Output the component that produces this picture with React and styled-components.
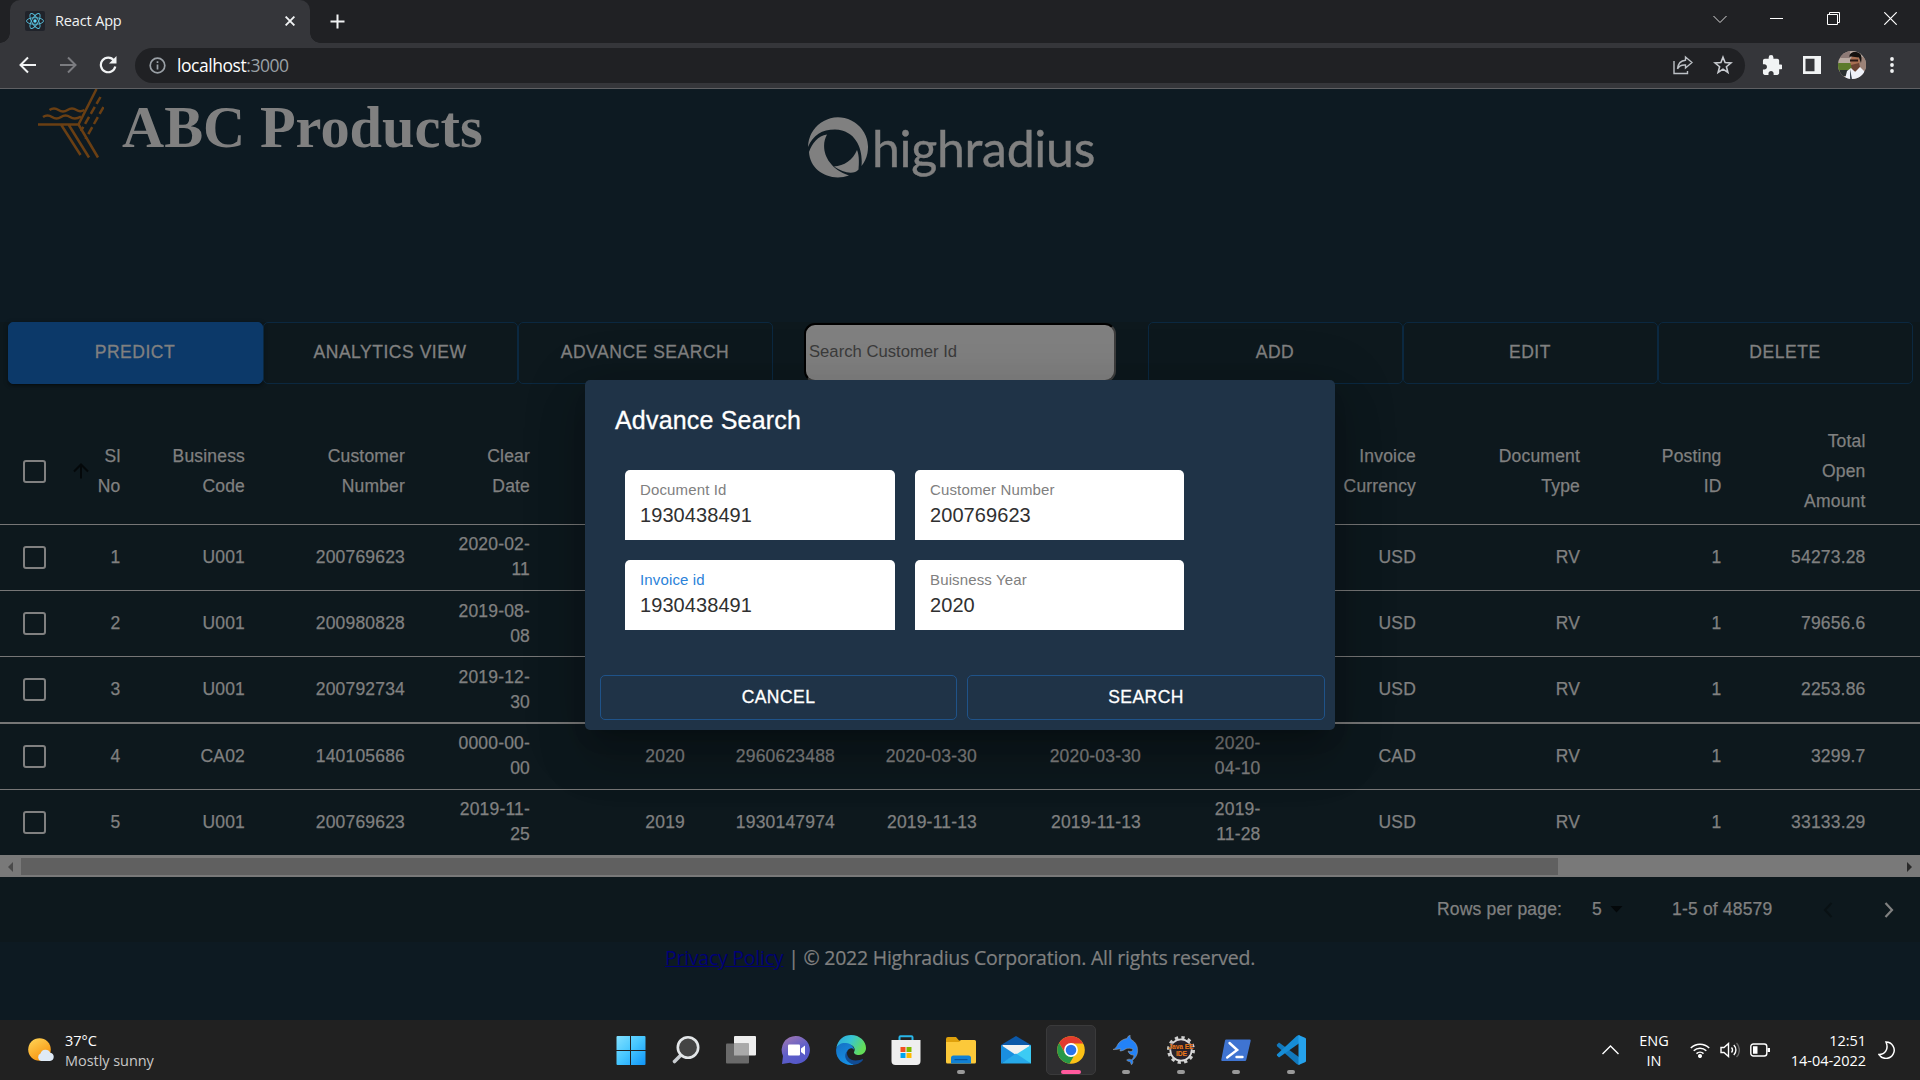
import React from "react";
import styled, { createGlobalStyle } from "styled-components";

const GlobalStyle = createGlobalStyle`
  * { box-sizing: border-box; }
  html, body { margin: 0; padding: 0; background: #202124; overflow: hidden; }
`;

const uiFont = `"Open Sans", "Noto Sans", sans-serif`;
const appFont = `"Liberation Sans", Arial, sans-serif`;

const Screen = styled.div`
  width: 1920px;
  height: 1080px;
  display: flex;
  flex-direction: column;
  overflow: hidden;
  font-family: ${appFont};
`;

const Glyph = styled.svg`
  display: block;
  flex: none;
  width: ${(p) => p.$w || 20}px;
  height: ${(p) => p.$h || p.$w || 20}px;
  margin-left: ${(p) => p.$ml || 0}px;
  fill: ${(p) => p.$fill || "none"};
  stroke: ${(p) => p.$stroke || "none"};
  stroke-width: ${(p) => p.$sw || 0};
`;

/* ---------- Browser chrome ---------- */

const TabStrip = styled.div`
  flex: none;
  height: 43px;
  display: flex;
  align-items: stretch;
  padding-left: 10px;
  background: #202124;
`;

const Tab = styled.div`
  position: relative;
  width: 300px;
  padding: 0 15px 1px;
  display: flex;
  align-items: center;
  background: #35363a;
  border-radius: 10px 10px 0 0;

  &::before, &::after {
    content: "";
    position: absolute;
    bottom: 0;
    width: 10px;
    height: 10px;
  }
  &::before { left: -10px; background: radial-gradient(circle at 0 0, #202124 9.5px, #35363a 10px); }
  &::after { right: -10px; background: radial-gradient(circle at 100% 0, #202124 9.5px, #35363a 10px); }
`;

const TabTitle = styled.span`
  flex: 1;
  margin-left: 10px;
  color: #f1f3f4;
  font: 14.5px/20px ${uiFont};
  letter-spacing: -0.15px;
`;

const NewTab = styled.div`
  width: 55px;
  display: flex;
  align-items: center;
  justify-content: center;
`;

const WindowControls = styled.div`
  margin-left: auto;
  margin-right: 1px;
  height: 37px;
  display: flex;
`;

const WindowButton = styled.div`
  width: 57px;
  display: flex;
  align-items: center;
  justify-content: center;
`;

const Toolbar = styled.div`
  flex: none;
  height: 46px;
  display: flex;
  align-items: center;
  padding: 0 8px 1px;
  background: #35363a;
  border-bottom: 1px solid #5f6063;
`;

const IconSlot = styled.div`
  width: 40px;
  flex: none;
  display: flex;
  align-items: center;
  justify-content: center;
`;

const AddressBar = styled.div`
  width: 1610px;
  height: 35px;
  margin: 0 7px;
  padding: 0 2px 0 14px;
  display: flex;
  align-items: center;
  border-radius: 18px;
  background: #202124;
`;

const Url = styled.span`
  flex: 1;
  margin-left: 11px;
  color: #ffffff;
  font: 17.5px/24px ${uiFont};
  letter-spacing: -0.45px;
  span { color: #9aa0a6; }
`;

/* ---------- Application page ---------- */

const Page = styled.main`
  position: relative;
  flex: none;
  height: 931px;
  display: flex;
  flex-direction: column;
  background: #0d1a22;
`;

const Brand = styled.header`
  height: 233px;
  flex: none;
  display: flex;
  align-items: flex-start;
  padding-left: 38px;
`;

const BrandName = styled.h1`
  width: 686px;
  margin: 5px 0 0 18px;
  color: #808080;
  font: bold 58.4px/68px "Liberation Serif", "Times New Roman", serif;
`;

const ProductLogo = styled.div`
  display: flex;
  align-items: flex-start;
  margin-top: 28px;
`;

const ProductWord = styled.span`
  margin: -4px 0 0 3px;
  color: #808080;
  font: 50px/70px Lato, sans-serif;
  letter-spacing: -0.3px;
  -webkit-text-stroke: 0.4px #808080;
`;

const Grid = styled.section`
  height: 620px;
  flex: none;
  display: flex;
  flex-direction: column;
  background: #0d181d;
`;

const ActionBar = styled.div`
  height: 62px;
  flex: none;
  display: flex;
  align-items: stretch;
  padding: 0 7px 0 8px;
`;

const ActionButton = styled.button`
  width: 255px;
  padding: 0 1px 3px 0;
  border: 1px solid ${(p) => (p.$primary ? "#0c3969" : "#0b2840")};
  border-radius: 5px;
  background: ${(p) => (p.$primary ? "#0c3969" : "transparent")};
  box-shadow: ${(p) => (p.$primary ? "0 3px 3px -2px rgba(0,0,0,.4), 0 1px 5px rgba(0,0,0,.3)" : "none")};
  color: #808080;
  font: 17.5px/30px ${appFont};
  letter-spacing: 0.53px;
  -webkit-text-stroke: 0.3px #808080;
`;

const SearchBox = styled.input`
  width: 312px;
  height: 59px;
  margin: 1px 32px 0 31px;
  padding: 0 3px 1px;
  border: 2px inset #3b3b3b;
  border-color: #15191b #3d3d3d #3d3d3d #15191b;
  border-radius: 11px;
  background: #808080;
  font: 16.667px/24px ${appFont};
  &::placeholder { color: #3b3b3b; opacity: 1; }
`;

const columns = "70px 50.5px 124.5px 160px 125px 155px 150px 142px 164px 119.5px 155.5px 164px 141.5px 144px 55px";

const HeadRow = styled.div`
  flex: none;
  height: 141px;
  padding-top: 34px;
  display: grid;
  grid-template-columns: ${columns};
  align-items: center;
  border-bottom: 1px solid #767676;
`;

const Row = styled.div`
  flex: none;
  height: ${(p) => p.$height}px;
  display: grid;
  grid-template-columns: ${columns};
  align-items: center;
  border-bottom: ${(p) => p.$height - 65}px solid #767676;
`;

const Cell = styled.span`
  padding-bottom: ${(p) => (p.$lift ? 1 : 0)}px;
  text-align: right;
  white-space: pre;
  color: #808080;
  font-size: 17.5px;
  line-height: ${(p) => (p.$head ? 30 : 25)}px;
  letter-spacing: 0.18px;
  -webkit-text-stroke: 0.25px #808080;
`;

const SortCell = styled.div`
  display: flex;
  align-items: center;
  justify-content: space-between;
`;

const Checkbox = styled.i`
  display: block;
  width: 23px;
  height: 23px;
  margin-left: 23px;
  border: 2.5px solid #808080;
  border-radius: 3px;
`;

const ScrollTrack = styled.div`
  flex: none;
  height: 22px;
  display: flex;
  align-items: center;
  background: #797979;
  padding: 1px 8px 0;
`;

const ScrollThumb = styled.div`
  width: 1537px;
  height: 17px;
  margin: 0 auto 0 8px;
  background: #606060;
`;

const Pagination = styled.div`
  flex: 1;
  display: flex;
  align-items: center;
  padding-left: 1437px;
  color: #808080;
  font-size: 17.5px;
  letter-spacing: 0.18px;
  -webkit-text-stroke: 0.25px #808080;
`;

const PageText = styled.span`
  width: ${(p) => p.$w}px;
  margin-left: ${(p) => p.$ml || 0}px;
  white-space: nowrap;
`;

const Footer = styled.footer`
  display: flex;
  justify-content: center;
  color: #808080;
  white-space: pre;
  font: 19.5px/31px ${uiFont};
  letter-spacing: -0.24px;
  -webkit-text-stroke: 0.2px #808080;
  a { color: #000077; text-decoration: underline; -webkit-text-stroke: 0; }
`;

/* ---------- Dialog ---------- */

const Overlay = styled.div`
  position: absolute;
  inset: 0;
  display: flex;
  align-items: center;
  justify-content: center;
`;

const Dialog = styled.div`
  width: 750px;
  height: 350px;
  margin-top: 1px;
  display: flex;
  flex-direction: column;
  border-radius: 5px;
  background: #1f3347;
  box-shadow: 0 14px 19px -9px rgba(0, 0, 0, 0.2), 0 30px 48px 4px rgba(0, 0, 0, 0.14),
    0 11px 58px 10px rgba(0, 0, 0, 0.12);
`;

const DialogTitle = styled.h2`
  margin: 0;
  padding: 20px 30px;
  color: #ffffff;
  font: 25px/40px ${appFont};
  letter-spacing: 0.19px;
  -webkit-text-stroke: 0.3px #ffffff;
`;

const Fields = styled.div`
  display: grid;
  grid-template-columns: 270px 269px;
  gap: 20px;
  padding: 10px 40px 0;
`;

const Field = styled.label`
  height: 70px;
  padding: 10px 15px 0;
  display: flex;
  flex-direction: column;
  border-radius: 5px 5px 0 0;
  background: #ffffff;
`;

const FieldLabel = styled.span`
  color: ${(p) => (p.$focused ? "#2b82d9" : "#808080")};
  font-size: 15px;
  line-height: 20px;
  letter-spacing: 0.14px;
`;

const FieldInput = styled.input`
  width: 100%;
  height: 30px;
  padding: 0;
  border: 0;
  outline: 0;
  background: transparent;
  color: #303030;
  font: 20px/29px ${appFont};
  letter-spacing: 0.08px;
`;

const DialogActions = styled.div`
  margin-top: auto;
  display: grid;
  grid-template-columns: 357px 358px;
  gap: 10px;
  padding: 0 10px 10px 15px;
`;

const DialogButton = styled.button`
  height: 45px;
  padding: 0 0 1px;
  border: 1px solid #1f5389;
  border-radius: 5px;
  background: transparent;
  color: #ffffff;
  font: 17.5px/30px ${appFont};
  letter-spacing: 0.45px;
  -webkit-text-stroke: 0.3px #ffffff;
`;

/* ---------- Taskbar ---------- */

const Taskbar = styled.div`
  flex: none;
  height: 60px;
  display: flex;
  align-items: stretch;
  background: #212121;
  color: #ffffff;
  font: 14.5px/20px ${uiFont};
  letter-spacing: -0.05px;
`;

const Weather = styled.div`
  width: 603px;
  padding-left: 27px;
  display: flex;
  align-items: center;
`;

const Stack = styled.div`
  display: flex;
  flex-direction: column;
  padding-top: 1px;
  text-align: ${(p) => p.$align || "left"};
  margin-left: ${(p) => p.$ml || 0}px;
  width: ${(p) => (p.$w ? p.$w + "px" : "auto")};
  white-space: nowrap;
`;

const Muted = styled.span`
  color: #c8c8c8;
`;

const AppSlot = styled.div`
  width: 55px;
  display: flex;
  justify-content: center;
`;

const AppTile = styled.div`
  width: 50px;
  height: 50px;
  margin-top: 5px;
  padding-top: 9px;
  display: flex;
  flex-direction: column;
  align-items: center;
  border-radius: 5px;
  border: 1px solid ${(p) => (p.$active ? "#3a3a3b" : "transparent")};
  background: ${(p) => (p.$active ? "#2e2e30" : "transparent")};
`;

const Indicator = styled.i`
  width: ${(p) => (p.$active ? 20 : 8)}px;
  height: 4px;
  margin-top: 5px;
  border-radius: 2px;
  background: ${(p) => (p.$active ? "#ff5a9d" : "#999999")};
`;

const Tray = styled.div`
  margin-left: auto;
  width: 318px;
  display: flex;
  align-items: center;
`;

const TrayIcons = styled.div`
  display: flex;
  margin-left: 11px;
`;

const TrayIcon = styled.div`
  width: 30px;
  height: 16px;
  display: flex;
  align-items: center;
  justify-content: center;
`;

/* ---------- Data ---------- */

const headings = [
  "Business\nCode", "Customer\nNumber", "Clear\nDate", "", "", "", "", "",
  "Invoice\nCurrency", "Document\nType", "Posting\nID", "Total\nOpen\nAmount",
];

const rows = [
  { height: 66, lift: true, cells: ["1", "U001", "200769623", "2020-02-\n11", "", "", "", "", "", "USD", "RV", "1", "54273.28"] },
  { height: 66, cells: ["2", "U001", "200980828", "2019-08-\n08", "", "", "", "", "", "USD", "RV", "1", "79656.6"] },
  { height: 67, cells: ["3", "U001", "200792734", "2019-12-\n30", "", "", "", "", "", "USD", "RV", "1", "2253.86"] },
  { height: 66, lift: true, cells: ["4", "CA02", "140105686", "0000-00-\n00", "2020", "2960623488", "2020-03-30", "2020-03-30", "2020-\n04-10", "CAD", "RV", "1", "3299.7"] },
  { height: 65, lift: true, cells: ["5", "U001", "200769623", "2019-11-\n25", "2019", "1930147974", "2019-11-13", "2019-11-13", "2019-\n11-28", "USD", "RV", "1", "33133.29"] },
];

const fields = [
  { label: "Document Id", value: "1930438491" },
  { label: "Customer Number", value: "200769623" },
  { label: "Invoice id", value: "1930438491", focused: true },
  { label: "Buisness Year", value: "2020" },
];

/* ---------- Taskbar icons, each on a 30 x 30 board ---------- */

const icons = {
  windows: (
    <>
      <defs>
        <linearGradient id="win" x1="0" y1="0" x2="30" y2="30" gradientUnits="userSpaceOnUse">
          <stop offset="0" stopColor="#86e2ff" /><stop offset=".5" stopColor="#45c6ff" /><stop offset="1" stopColor="#0f94f8" />
        </linearGradient>
      </defs>
      <path fill="url(#win)" d="M.5 2a1 1 0 0 1 1-1h12.500v14H.5zM15 1h13.500a1 1 0 0 1 1 1v13H15zM.5 16H14v14H1.500a1 1 0 0 1-1-1zM15 16h14.500v13a1 1 0 0 1-1 1H15z" />
    </>
  ),
  search: (
    <>
      <path d="M10 20L3.500 26.500" stroke="#c9cdd1" strokeWidth="3.600" strokeLinecap="round" />
      <circle cx="17" cy="12.500" r="10.200" fill="#444444" stroke="#e3e6e8" strokeWidth="2.600" />
    </>
  ),
  taskview: (
    <>
      <rect x="8" y="1" width="22" height="19.500" rx="1" fill="#eeeeee" />
      <rect x="0" y="8.500" width="23" height="20" rx="1" fill="#6a6a6a" />
      <rect x="8" y="8.500" width="15" height="12" fill="#a9a9a9" />
    </>
  ),
  chat: (
    <>
      <defs>
        <linearGradient id="chat" x1="0" y1="0" x2=".5" y2="1">
          <stop offset="0" stopColor="#a879b0" /><stop offset=".6" stopColor="#5f5fc8" /><stop offset="1" stopColor="#5558c9" />
        </linearGradient>
      </defs>
      <path fill="url(#chat)" d="M15 1a14 14 0 1 1-6 26.700L1 29l1-8A14 14 0 0 1 15 1z" />
      <rect x="7" y="9.500" width="12" height="11" rx="1" fill="#ffffff" />
      <path fill="#ffffff" d="M20 13.500L24 10.500V20l-4-3z" />
    </>
  ),
  edge: (
    <>
      <defs>
        <linearGradient id="edgeA" x1="0" y1="0" x2="1" y2=".4">
          <stop offset="0" stopColor="#2aa7dd" /><stop offset=".5" stopColor="#37c4d4" /><stop offset="1" stopColor="#63dd58" />
        </linearGradient>
        <linearGradient id="edgeB" x1="0" y1="0" x2=".5" y2="1">
          <stop offset="0" stopColor="#1470c4" /><stop offset="1" stopColor="#168fe3" />
        </linearGradient>
      </defs>
      <path fill="url(#edgeA)" d="M.4 12.500C2 4.500 8 0 15 0c9 0 15 6.500 15 13 0 4-3 7-7 7-3.500 0-5.500-1.500-5-3 1.500-1.800 1-6.500-5-7.500C8 8.700 2.500 10 .4 12.500z" />
      <path fill="url(#edgeB)" d="M.2 14C1 9 6.500 7.500 10 8c5 .6 8 3.500 8 7-1-2-3-2.300-5-1-5 4-1.500 12.500 5 15.700C8 31.500-1 24 .2 14z" />
      <path fill="#114c94" d="M11.500 15.500c-2 5 2 10 8 10 4 0 6.500-1.800 7.500-1.200.8.600-3 4.800-8.500 5.500C10 28 6.500 21 11.500 15.500z" />
    </>
  ),
  store: (
    <>
      <path d="M8.500 6V2.200a1 1 0 0 1 1-1h11a1 1 0 0 1 1 1V6" fill="none" stroke="#29b6e8" strokeWidth="2" />
      <path fill="#efefef" d="M.5 5h29v21a4 4 0 0 1-4 4h-21a4 4 0 0 1-4-4z" />
      <path fill="#f25022" d="M9.500 12h5v5h-5z" /><path fill="#7fba00" d="M15.500 12h5v5h-5z" />
      <path fill="#00a4ef" d="M9.500 18h5v5h-5z" /><path fill="#ffb900" d="M15.500 18h5v5h-5z" />
    </>
  ),
  explorer: (
    <>
      <path fill="#dfa10c" d="M0 4a2 2 0 0 1 2-2h8l3 3.500h5V12H0z" />
      <path fill="#fcc93a" d="M0 7h13l2-2h13.500A1.500 1.500 0 0 1 30 6.500V27a1.500 1.500 0 0 1-1.500 1.500h-27A1.500 1.500 0 0 1 0 27z" />
      <path fill="#1181d4" d="M5 28.500V23a2.500 2.500 0 0 1 2.500-2.500h15A2.500 2.500 0 0 1 25 23v5.500z" />
      <path fill="#0a559c" d="M8.500 24h13v1.200h-13z" />
    </>
  ),
  mail: (
    <>
      <path fill="#0b58a8" d="M0 10L15 1l15 9v4H0z" />
      <path fill="#f1f1f1" d="M1.500 10h27v12h-27z" />
      <path fill="#1a8fe0" d="M0 10l15 10L0 28.500z" />
      <path fill="#3ccbf4" d="M30 10L12 21.500 30 28.500z" />
      <path fill="#27a9ea" d="M0 28.500L15 18.500l15 10z" />
    </>
  ),
  chrome: (
    <>
      <circle cx="15" cy="15" r="13.800" fill="#fbc116" />
      <path fill="#e33b2e" d="M15 15V8.500h12.200A13.800 13.800 0 0 0 3.100 8l5.800 9.500z" />
      <path fill="#279847" d="M3.100 8a13.800 13.800 0 0 0 10.300 20.700l6.200-10.500-4.600-3.200-6 3z" />
      <circle cx="15" cy="15" r="6.900" fill="#ffffff" />
      <circle cx="15" cy="15" r="5.300" fill="#2a72ea" />
    </>
  ),
  dolphin: (
    <path
      fill="#2382f7" stroke="#a9a29a" strokeWidth=".5"
      d="M2 14.500c2-.5 3.300-2 4.200-4C8 6.500 12 4 16 3.500c.5-1.500 1.500-3 3.200-3.200-.3 1.600 0 3 1.300 4.500 4.500 2.500 6.700 7 6 12.500-.5 3.500-2.500 6-5 8 .8 1.500.5 3.200-1 4.500-.6-1-1-2-1.300-3.200-1.400 0-2.700-.5-3.600-1.500 1.500-1.200 3.500-1.200 4.900-.3 1.700-1.500 2.400-3 2.300-4.600-2.200-.1-5-1-5.800-4.200 2.700 1 4.700.3 5-1.500-2-1.500-4.500-1.500-7-.8-1.800 1.400-4 2.300-6 2.300 0-1 .3-1.700.8-2.300-2.600.3-5 1.200-7.800.8z"
    />
  ),
  eclipse: (
    <>
      <circle cx="15" cy="15" r="12.600" fill="none" stroke="#cfcfcf" strokeWidth="2.800" strokeDasharray="3.300 3.300" />
      <circle cx="15" cy="15" r="10.700" fill="#29222b" stroke="#dcdcdc" strokeWidth="1.800" />
      <path d="M3 8.500h24v6H3z" fill="#221c20" opacity=".6" />
      <g fill="#f07a1a" stroke="none" fontFamily="Liberation Sans" fontWeight="bold" fontSize="6.800" textAnchor="middle">
        <text x="15" y="14" textLength="25">Java EE</text>
        <text x="15.500" y="20.500">IDE</text>
      </g>
    </>
  ),
  powershell: (
    <>
      <path fill="#3f74d1" d="M5.200 4.500h23.500a1 1 0 0 1 1 1.200l-4.400 19.100a1.500 1.500 0 0 1-1.400 1.200H1.300a1 1 0 0 1-1-1.200L4 5.500a1.300 1.300 0 0 1 1.200-1z" />
      <path d="M8.500 8l7.700 7-10 7.500M15.500 22h6" fill="none" stroke="#ffffff" strokeWidth="2.400" strokeLinecap="round" />
    </>
  ),
  vscode: (
    <>
      <path fill="#1279bd" d="M1 9.500L3 7.600l20.500 15V30l-2.500-.8L.8 11z" />
      <path fill="#168dd6" d="M1 20.500l2 1.900L23.500 8V0L21 .8.8 19.500z" />
      <path fill="#25a2ec" d="M22.500 0L29 2.800a1.500 1.500 0 0 1 1 1.500v21.400a1.500 1.500 0 0 1-1 1.500L22.500 30z" />
    </>
  ),
};

const pinned = [
  ["windows"], ["search"], ["taskview"], ["chat"], ["edge"], ["store"],
  ["explorer", "open"], ["mail"], ["chrome", "active"], ["dolphin", "open"],
  ["eclipse", "open"], ["powershell", "open"], ["vscode", "open"],
];

function BrowserChrome() {
  return (
    <>
      <TabStrip>
        <Tab>
          <Glyph $w={20} viewBox="0 0 20 20">
            <rect width="20" height="20" rx="2" fill="#20232a" />
            <g fill="none" stroke="#61dafb" strokeWidth=".9" opacity=".85">
              <ellipse cx="10" cy="10" rx="8.500" ry="3.300" />
              <ellipse cx="10" cy="10" rx="8.500" ry="3.300" transform="rotate(60 10 10)" />
              <ellipse cx="10" cy="10" rx="8.500" ry="3.300" transform="rotate(120 10 10)" />
            </g>
            <circle cx="10" cy="10" r="1.700" fill="#61dafb" />
          </Glyph>
          <TabTitle>React App</TabTitle>
          <Glyph $w={10} $stroke="#f1f3f4" $sw={1.9} viewBox="0 0 10 10"><path d="M.6.600l8.800 8.800M9.400.600L.6 9.400" /></Glyph>
        </Tab>
        <NewTab>
          <Glyph $w={15} $stroke="#f1f3f4" $sw={2} viewBox="0 0 15 15"><path d="M7.500.500v14M.5 7.500h14" /></Glyph>
        </NewTab>
        <WindowControls>
          <WindowButton><Glyph $w={14} $stroke="#d8d8d8" $sw={1} viewBox="0 0 14 14"><path d="M.5 4L7 10.500 13.500 4" /></Glyph></WindowButton>
          <WindowButton><Glyph $w={13} $stroke="#ffffff" $sw={1} viewBox="0 0 13 13"><path d="M0 6.500h13" /></Glyph></WindowButton>
          <WindowButton><Glyph $w={13} $stroke="#ffffff" $sw={1} viewBox="0 0 13 13"><path d="M.5 2.500h10v10h-10zM2.500 2.500v-2h10v10h-2" /></Glyph></WindowButton>
          <WindowButton><Glyph $w={13} $stroke="#ffffff" $sw={1.2} viewBox="0 0 13 13"><path d="M.3.300l12.400 12.400M12.700.300L.3 12.700" /></Glyph></WindowButton>
        </WindowControls>
      </TabStrip>
      <Toolbar>
        <IconSlot><Glyph $w={18} $stroke="#f1f3f4" $sw={2} viewBox="0 0 18 18"><path d="M17 9H2M9 1.500L1.500 9 9 16.500" /></Glyph></IconSlot>
        <IconSlot><Glyph $w={18} $stroke="#7b7c80" $sw={2} viewBox="0 0 18 18"><path d="M1 9h15M9 1.500L16.500 9 9 16.500" /></Glyph></IconSlot>
        <IconSlot>
          <Glyph $w={18} viewBox="0 0 18 18">
            <path d="M15 4.500A7.300 7.300 0 1 0 16.300 10.500" fill="none" stroke="#f1f3f4" strokeWidth="2.200" />
            <path d="M17.500 0v7.500H10z" fill="#f1f3f4" />
          </Glyph>
        </IconSlot>
        <AddressBar>
          <Glyph $w={17} $stroke="#9aa0a6" $sw={1.7} viewBox="0 0 17 17"><circle cx="8.500" cy="8.500" r="7.300" /><path d="M8.500 7.500v5M8.500 4.200v1.900" /></Glyph>
          <Url>localhost<span>:3000</span></Url>
          <IconSlot>
            <Glyph $w={20} $stroke="#bdc1c6" $sw={1.4} viewBox="0 0 20 20">
              <path d="M1 6v12.500h13.500V16" />
              <path d="M12.500 2l6.500 5.500-6.500 5.500v-3C8.500 9.700 6 11 4.500 13.800 5 9 8 5.500 12.500 5.200z" />
            </Glyph>
          </IconSlot>
          <IconSlot>
            <Glyph $w={20} $stroke="#c8cbd0" $sw={1.6} viewBox="0 0 20 20"><path d="M10 2.200l2.100 5.400 5.800.400-4.500 3.700 1.500 5.700-4.900-3.200-4.900 3.200 1.500-5.700L2.100 8l5.800-.4z" /></Glyph>
          </IconSlot>
        </AddressBar>
        <IconSlot>
          <Glyph $w={20} $fill="#f1f3f4" viewBox="1 1 21 21">
            <path d="M20.500 11H19V7c0-1.100-.9-2-2-2h-4V3.500a2.500 2.500 0 0 0-5 0V5H4c-1.100 0-2 .9-2 2v3.800h1.500c1.500 0 2.700 1.200 2.700 2.700S5 16.200 3.500 16.200H2V20c0 1.100.9 2 2 2h3.800v-1.500c0-1.500 1.200-2.700 2.700-2.700s2.700 1.200 2.700 2.700V22H17c1.100 0 2-.9 2-2v-4h1.500a2.500 2.500 0 0 0 0-5z" />
          </Glyph>
        </IconSlot>
        <IconSlot>
          <Glyph $w={18} viewBox="0 0 18 18"><path fill="#f1f3f4" fillRule="evenodd" d="M0 0h18v18H0zM2.500 2.800v12.400h9V2.800z" /></Glyph>
        </IconSlot>
        <IconSlot>
          <Glyph $w={28} viewBox="0 0 28 28">
            <defs><clipPath id="face"><circle cx="14" cy="14" r="14" /></clipPath></defs>
            <g clipPath="url(#face)">
              <rect width="28" height="28" fill="#b9aaa2" />
              <rect y="0" width="12" height="7" fill="#8d7a76" />
              <rect x="21" y="6" width="7" height="14" fill="#9c8378" />
              <rect y="12" width="15" height="8" fill="#5c7a2b" />
              <path d="M2 19h10v6H2z" fill="#2b3030" />
              <ellipse cx="17" cy="10.500" rx="4.800" ry="6.500" fill="#a86f52" />
              <path d="M11.500 6C11 2 15 .5 18 1c5 .500 6.500 4 5 11l-2-5.500L13 5.500z" fill="#14110f" />
              <path d="M12 8.500h8v2h-8z" fill="#2a1a16" />
              <path d="M13 14l8-2 1 4-4 5-4-2z" fill="#6d4434" />
              <path d="M7 28l2-8 4-3 4 4 5-5 4 4 2 8z" fill="#eef1f8" />
              <path d="M12 18l2 10h-2z" fill="#3b4450" />
            </g>
          </Glyph>
        </IconSlot>
        <IconSlot>
          <Glyph $w={4} $h={18} $fill="#f1f3f4" viewBox="0 0 4 18"><circle cx="2" cy="3" r="1.900" /><circle cx="2" cy="9" r="1.900" /><circle cx="2" cy="15" r="1.900" /></Glyph>
        </IconSlot>
      </Toolbar>
    </>
  );
}

function Header() {
  return (
    <Brand>
      <Glyph $w={66} $h={70} $stroke="#6a3f13" $sw={2.5} viewBox="0 0 66 70">
        <path d="M0 35.500h40.500L58.500 0M23 35.500L42.500 66M30.500 35.500L51 68.500M40.500 35.500L60 68.500" />
        <path d="M5 28c3-2 6-2 9 0s6 2 9 0 6-2 9 0 7 2 11-.5M11.500 21c3-2 6-2 9 0s6 2 9 0 6-2 9 0 5 1.500 8 0" />
        <path strokeDasharray="8 3.500" d="M62.500 8L43 42M65.500 18L47.500 50" />
      </Glyph>
      <BrandName>ABC Products</BrandName>
      <ProductLogo>
        <Glyph $w={61} $h={62} $fill="#808080" viewBox="0 0 61 62">
          <path d="M0 30A30 30 0 1 1 53.500 49C55 35 50 13.500 27 12.500 14 12.500 5 18 0 30z" />
          <path d="M1 35C4 26 10 19 19 17.500 12 30 17 50 41 58.500 22 65 2 54 1 35z" />
          <path d="M49 33c2.500 6 2 14 1.500 19.500C46 58 35 56 26 49.500 36 49 45 43 49 33z" />
        </Glyph>
        <ProductWord>highradius</ProductWord>
      </ProductLogo>
    </Brand>
  );
}

function InvoiceGrid() {
  return (
    <Grid>
      <ActionBar>
        <ActionButton $primary>PREDICT</ActionButton>
        <ActionButton>ANALYTICS VIEW</ActionButton>
        <ActionButton>ADVANCE SEARCH</ActionButton>
        <SearchBox placeholder="Search Customer Id" />
        <ActionButton>ADD</ActionButton>
        <ActionButton>EDIT</ActionButton>
        <ActionButton>DELETE</ActionButton>
      </ActionBar>
      <HeadRow>
        <Checkbox />
        <SortCell>
          <Glyph $w={16} $ml={3} $stroke="#04080a" $sw={2} viewBox="0 0 16 16">
            <path d="M8 15.500V2M1 8.500L8 1.500l7 7" />
          </Glyph>
          <Cell $head>{"Sl\nNo"}</Cell>
        </SortCell>
        {headings.map((h, i) => <Cell $head key={i}>{h}</Cell>)}
      </HeadRow>
      {rows.map(({ height, lift, cells }, r) => (
        <Row key={r} $height={height}>
          <Checkbox />
          {cells.map((c, i) => <Cell key={i} $lift={lift && c.includes("\n")}>{c}</Cell>)}
        </Row>
      ))}
      <ScrollTrack>
        <Glyph $w={5} $h={10} $fill="#4a4a4a" viewBox="0 0 5 10"><path d="M5 0v10L0 5z" /></Glyph>
        <ScrollThumb />
        <Glyph $w={5} $h={10} $fill="#2a2a2a" viewBox="0 0 5 10"><path d="M0 0v10l5-5z" /></Glyph>
      </ScrollTrack>
      <Pagination>
        <PageText $w={155}>Rows per page:</PageText>
        <PageText $w={18}>5</PageText>
        <Glyph $w={13} $h={7} $fill="#04080a" viewBox="0 0 13 7"><path d="M.5 0h12l-6 6.500z" /></Glyph>
        <PageText $w={104} $ml={49}>1-5 of 48579</PageText>
        <Glyph $w={10} $h={16} $ml={47} $stroke="#091114" $sw={2} viewBox="0 0 10 16"><path d="M8.500 1L2 8l6.500 7" /></Glyph>
        <Glyph $w={10} $h={16} $ml={51} $stroke="#808080" $sw={2.2} viewBox="0 0 10 16"><path d="M1.500 1L8 8l-6.500 7" /></Glyph>
      </Pagination>
    </Grid>
  );
}

function AdvanceSearch() {
  return (
    <Overlay>
      <Dialog>
        <DialogTitle>Advance Search</DialogTitle>
        <Fields>
          {fields.map((f) => (
            <Field key={f.label}>
              <FieldLabel $focused={f.focused}>{f.label}</FieldLabel>
              <FieldInput defaultValue={f.value} />
            </Field>
          ))}
        </Fields>
        <DialogActions>
          <DialogButton>CANCEL</DialogButton>
          <DialogButton>SEARCH</DialogButton>
        </DialogActions>
      </Dialog>
    </Overlay>
  );
}

function SystemTaskbar() {
  return (
    <Taskbar>
      <Weather>
        <Glyph $w={28} $h={26} viewBox="0 0 28 26">
          <defs><linearGradient id="sun" x1="0" y1="0" x2=".6" y2="1"><stop offset="0" stopColor="#ffd75a" /><stop offset="1" stopColor="#f7930e" /></linearGradient></defs>
          <circle cx="12.500" cy="12.500" r="11.300" fill="url(#sun)" />
          <path fill="#dfeaf6" d="M14 24a4 4 0 0 1-.5-7.500 5.300 5.300 0 0 1 9.800-.8A4.200 4.200 0 0 1 23 24z" />
        </Glyph>
        <Stack $ml={10}>
          <span>37°C</span>
          <Muted>Mostly sunny</Muted>
        </Stack>
      </Weather>
      {pinned.map(([name, state]) => (
        <AppSlot key={name}>
          <AppTile $active={state === "active"}>
            <Glyph $w={30} viewBox="0 0 30 30">{icons[name]}</Glyph>
            {state && <Indicator $active={state === "active"} />}
          </AppTile>
        </AppSlot>
      ))}
      <Tray>
        <Glyph $w={17} $h={10} $stroke="#ffffff" $sw={1.4} viewBox="0 0 17 10"><path d="M.5 9L8.500 1l8 8" /></Glyph>
        <Stack $align="center" $ml={15} $w={40}><span>ENG</span><span>IN</span></Stack>
        <TrayIcons>
          <TrayIcon>
            <Glyph $w={20} $h={16} $stroke="#ffffff" $sw={1.5} viewBox="0 0 20 16">
              <path d="M.8 6a13 13 0 0 1 18.400 0M3.700 8.800a9 9 0 0 1 12.600 0M6.500 11.600a5 5 0 0 1 7 0" />
              <circle cx="10" cy="14" r="1.300" fill="#ffffff" />
            </Glyph>
          </TrayIcon>
          <TrayIcon>
            <Glyph $w={20} $h={16} $stroke="#ffffff" $sw={1.4} viewBox="0 0 20 16">
              <path d="M1 5.500h3L8.500 1.500v13L4 10.500H1zM11.500 5.500a4 4 0 0 1 0 5M13.800 3a7 7 0 0 1 0 10" />
              <path stroke="#666666" d="M16.500 1a10 10 0 0 1 0 14" />
            </Glyph>
          </TrayIcon>
          <TrayIcon>
            <Glyph $w={20} $h={14} $stroke="#ffffff" $sw={1.4} viewBox="0 0 20 14">
              <rect x=".8" y="1" width="16" height="12" rx="2.500" />
              <path fill="#ffffff" stroke="none" d="M3 3.200h4.500v7.600H3zM17.500 5H20v4h-2.500z" />
            </Glyph>
          </TrayIcon>
        </TrayIcons>
        <Stack $align="right" $w={91}><span>12:51</span><span>14-04-2022</span></Stack>
        <Glyph $w={18} $ml={12} $stroke="#ffffff" $sw={1.5} viewBox="0 0 18 18"><path d="M8 1a8.200 8.200 0 1 1-7 12.500C7 13.500 11 8 8 1z" /></Glyph>
      </Tray>
    </Taskbar>
  );
}

export default function App() {
  return (
    <Screen>
      <GlobalStyle />
      <BrowserChrome />
      <Page>
        <Header />
        <InvoiceGrid />
        <Footer><a>Privacy Policy</a>{" | © 2022 Highradius Corporation. All rights reserved."}</Footer>
        <AdvanceSearch />
      </Page>
      <SystemTaskbar />
    </Screen>
  );
}
